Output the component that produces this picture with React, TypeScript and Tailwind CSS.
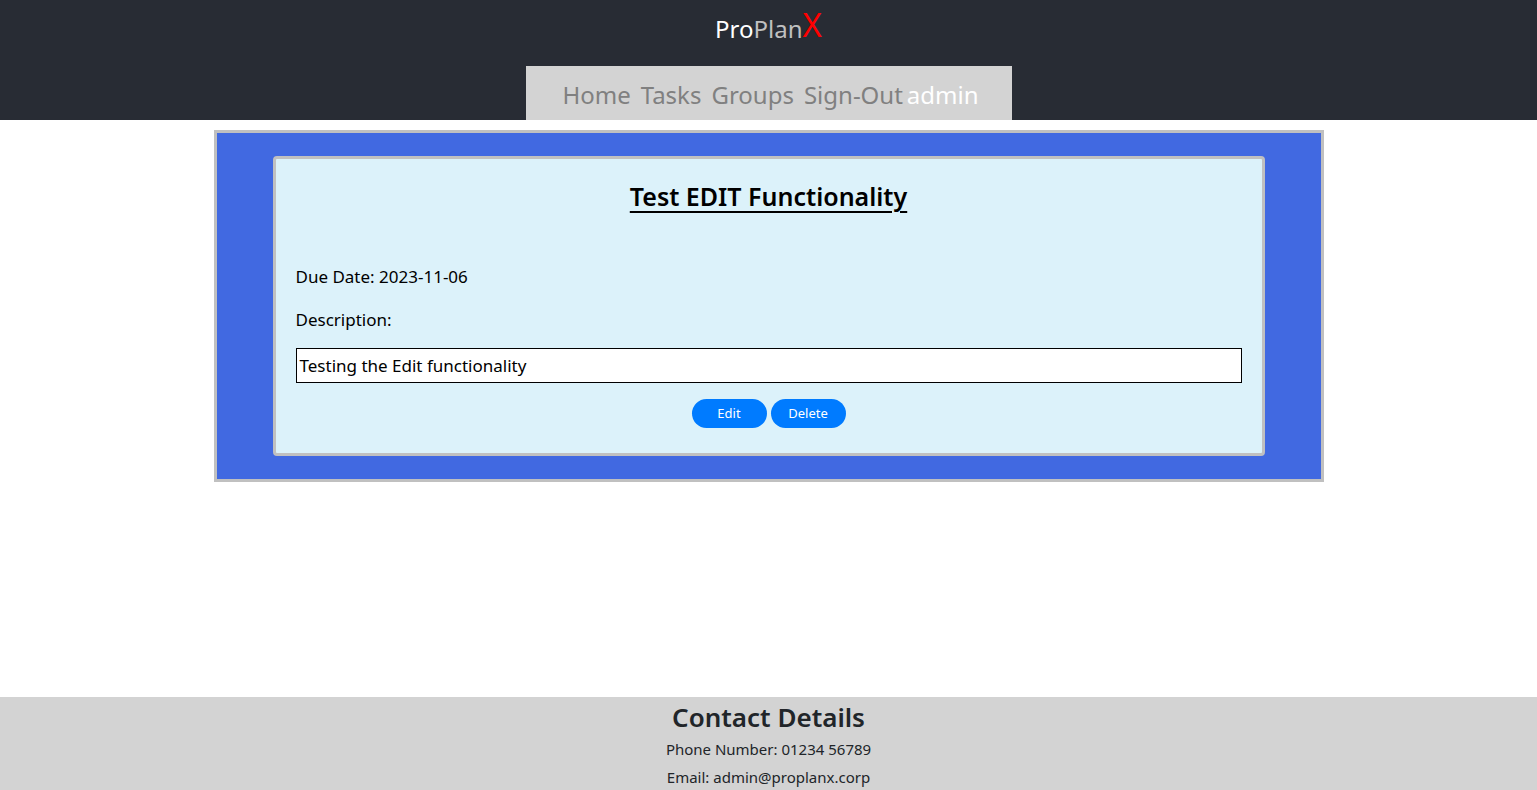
import React from "react";

const navLinks = ["Home", "Tasks", "Groups", "Sign-Out"];

const App: React.FC = () => {
  return (
    <div className="bg-white font-['Noto_Sans',sans-serif]">
      <header className="h-[120px] bg-[#282c34] flex flex-col items-center">
        <div className="mt-[3px] h-[38px] flex items-end text-[24px] leading-none">
          <span className="text-white">Pro</span>
          <span className="text-[#c0c0c0]">Plan</span>
          <span className="text-[#ff0000] text-[33px]">X</span>
        </div>
        <nav className="mt-[25px] w-[486px] h-[54px] bg-[#d3d3d3] flex items-center justify-center gap-[10px] text-[24px] pt-[3px] pl-[4px]">
          {navLinks.map((l) => (
            <a key={l} href="#" className="text-[#808080]">
              {l}
            </a>
          ))}
          <span className="text-white -ml-[6px]">admin</span>
        </nav>
      </header>

      <main className="h-[577px] pt-[10px]">
        <div className="mx-auto w-[1110px] h-[352px] border-[3px] border-[#c0c0c0] bg-[#4169e1] px-[56px] py-[23px]">
          <div className="h-full border-[3px] border-[#c0c0c0] rounded-[4px] bg-[#dcf2fa] px-[20px] text-black">
            <h2 className="text-center text-[25px] font-semibold underline underline-offset-[5px] decoration-[2px] mt-[19px] leading-[36px]">
              Test EDIT Functionality
            </h2>
            <p className="mt-[51px] text-[17px] leading-[24px]">Due Date: 2023-11-06</p>
            <p className="mt-[19px] text-[17px] leading-[24px]">Description:</p>
            <div className="mt-[16px] h-[35px] border border-black bg-white px-[3px] flex items-center text-[17px]">
              Testing the Edit functionality
            </div>
            <div className="mt-[16px] flex justify-center gap-[4px]">
              <button className="w-[75px] h-[29px] rounded-full bg-[#007bff] text-white text-[13px]">
                Edit
              </button>
              <button className="w-[75px] h-[29px] rounded-full bg-[#007bff] text-white text-[13px]">
                Delete
              </button>
            </div>
          </div>
        </div>
      </main>

      <footer className="h-[93px] bg-[#d3d3d3] flex flex-col items-center text-[#212529]">
        <h3 className="text-[26px] font-semibold leading-[40px]">Contact Details</h3>
        <p className="text-[15px] leading-[24px] mt-[0px]">Phone Number: 01234 56789</p>
        <p className="text-[15px] leading-[24px] mt-[4px]">Email: admin@proplanx.corp</p>
      </footer>
    </div>
  );
};

export default App;
